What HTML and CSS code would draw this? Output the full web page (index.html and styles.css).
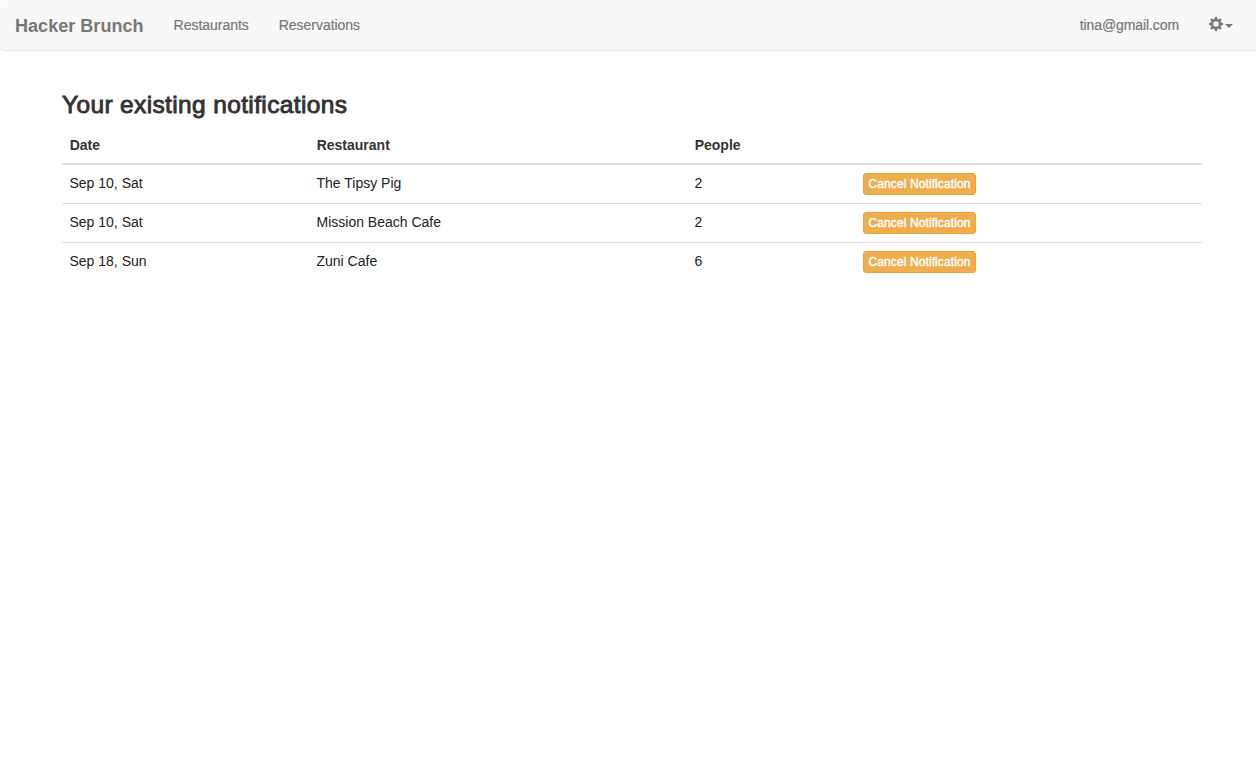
FILE: index.html
```html
<!DOCTYPE html>
<html lang="en">
<head>
<meta charset="utf-8">
<title>Hacker Brunch</title>
<link rel="stylesheet" href="styles.css">
</head>
<body>
<nav class="navbar">
  <a class="brand">Hacker Brunch</a>
  <a class="nav-link">Restaurants</a>
  <a class="nav-link">Reservations</a>
  <a class="nav-link user">tina@gmail.com</a>
  <a class="settings">
    <svg class="gear" viewBox="0 0 14 14" width="14" height="14"><path fill="currentColor" fill-rule="evenodd" d="M5.900 0h2.200l.3 2 1.200.5 1.600-1.200 1.500 1.500-1.200 1.600.5 1.200 2 .3v2.200l-2 .3-.5 1.200 1.200 1.600-1.500 1.500-1.600-1.200-1.200.5-.3 2H5.900l-.3-2-1.200-.5-1.600 1.200-1.500-1.500 1.200-1.600L2 8.400l-2-.3V5.900l2-.3.5-1.200-1.200-1.600 1.500-1.500 1.600 1.200 1.200-.5zM7 4.200a2.800 2.800 0 1 0 0 5.600 2.800 2.800 0 0 0 0-5.600z"/></svg>
    <span class="caret"></span>
  </a>
</nav>
<main class="container">
  <h1 class="title">Your existing notifications</h1>
  <table class="table">
    <colgroup><col class="c-date"><col class="c-name"><col class="c-people"><col></colgroup>
    <thead><tr><th>Date</th><th>Restaurant</th><th>People</th><th></th></tr></thead>
    <tbody>
      <tr><td>Sep 10, Sat</td><td>The Tipsy Pig</td><td>2</td><td><button class="btn">Cancel Notification</button></td></tr>
      <tr><td>Sep 10, Sat</td><td>Mission Beach Cafe</td><td>2</td><td><button class="btn">Cancel Notification</button></td></tr>
      <tr><td>Sep 18, Sun</td><td>Zuni Cafe</td><td>6</td><td><button class="btn">Cancel Notification</button></td></tr>
    </tbody>
  </table>
</main>
</body>
</html>
```
FILE: styles.css
```css
* { box-sizing: border-box; }
body { margin: 0; background: #fff; color: #333; font: 14px/20px "Liberation Sans", Arial, sans-serif; }
.navbar { display: flex; height: 51px; padding: 1px 8px 0 1px; background: #f8f8f8; border-bottom: 1px solid #e7e7e7; border-radius: 4px 0 0 4px; color: #777; }
.brand { padding: 15px 15px 15px 14px; font-size: 18px; font-weight: bold; letter-spacing: 0.04px; }
.nav-link { padding: 14px 15px 16px; letter-spacing: -0.03px; -webkit-text-stroke: 0.2px #777; }
.user { margin-left: auto; letter-spacing: -0.1px; }
.settings { display: flex; padding: 16px 15px 0; }
.caret { width: 0; height: 0; margin: 7px 0 0 2px; border: 4px solid transparent; border-top-color: #777; border-bottom: 0; }
.container { width: 1140px; margin: 41px 0 0 62px; }
.title { margin: 0 0 8px; font-size: 24.5px; line-height: 26px; font-weight: 500; letter-spacing: 0.36px; -webkit-text-stroke: 0.9px #333; }
.table { width: 100%; border-collapse: collapse; table-layout: fixed; }
.c-date { width: 247px; }
.c-name { width: 378px; }
.c-people { width: 168px; }
th { height: 38px; padding: 8px 8px 8px 7.7px; text-align: left; border-bottom: 2px solid #ddd; }
td { height: 39px; padding: 8px; vertical-align: top; border-top: 1px solid #ddd; color: #333; }
td:not(:last-child) { padding-left: 7.5px; color: #222; }
.btn { display: block; width: 113px; height: 22px; padding: 0; background: #f0ad4e; border: 1px solid #eea236; border-radius: 3px; color: #fff; font: 12px/18px "Liberation Sans", Arial, sans-serif; letter-spacing: 0.1px; -webkit-text-stroke: 0.4px #fff; white-space: nowrap; }
```
